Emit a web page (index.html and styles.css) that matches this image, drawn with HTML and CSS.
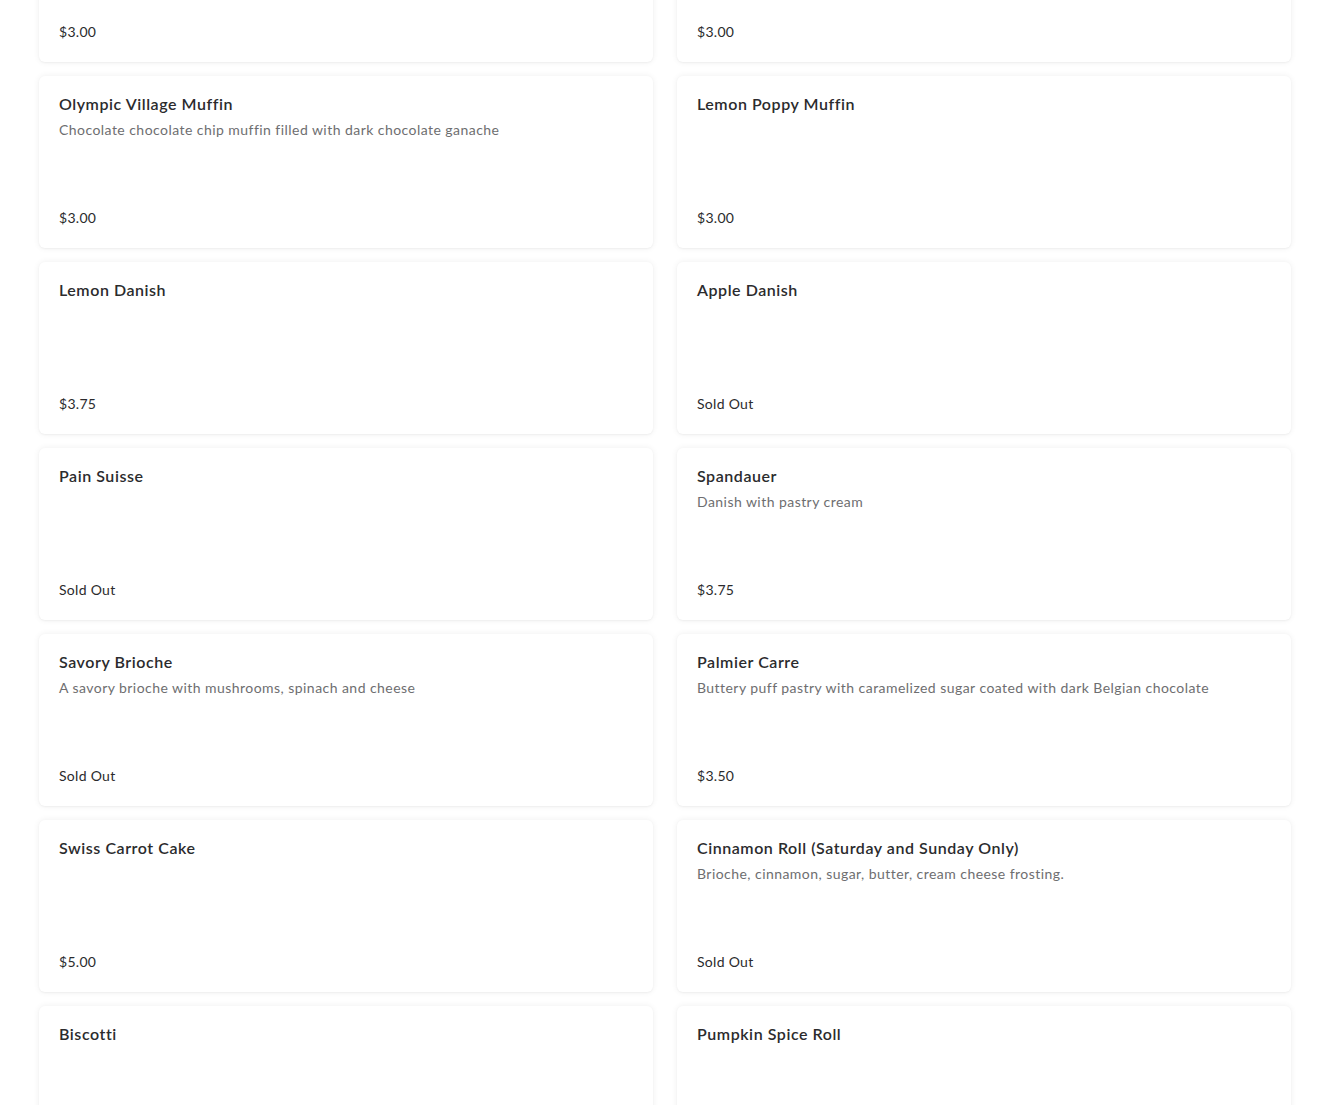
FILE: index.html
```html
<!DOCTYPE html>
<html>
<head>
<meta charset="utf-8">
<link rel="stylesheet" href="styles.css">
</head>
<body>
<div class="grid">
  <div class="card"><div class="price">$3.00</div></div>
  <div class="card"><div class="price">$3.00</div></div>
  <div class="card"><div class="title">Olympic Village Muffin</div><div class="desc">Chocolate chocolate chip muffin filled with dark chocolate ganache</div><div class="price">$3.00</div></div>
  <div class="card"><div class="title">Lemon Poppy Muffin</div><div class="price">$3.00</div></div>
  <div class="card"><div class="title">Lemon Danish</div><div class="price">$3.75</div></div>
  <div class="card"><div class="title">Apple Danish</div><div class="price">Sold Out</div></div>
  <div class="card"><div class="title">Pain Suisse</div><div class="price">Sold Out</div></div>
  <div class="card"><div class="title">Spandauer</div><div class="desc">Danish with pastry cream</div><div class="price">$3.75</div></div>
  <div class="card"><div class="title">Savory Brioche</div><div class="desc">A savory brioche with mushrooms, spinach and cheese</div><div class="price">Sold Out</div></div>
  <div class="card"><div class="title">Palmier Carre</div><div class="desc">Buttery puff pastry with caramelized sugar coated with dark Belgian chocolate</div><div class="price">$3.50</div></div>
  <div class="card"><div class="title">Swiss Carrot Cake</div><div class="price">$5.00</div></div>
  <div class="card"><div class="title">Cinnamon Roll (Saturday and Sunday Only)</div><div class="desc">Brioche, cinnamon, sugar, butter, cream cheese frosting.</div><div class="price">Sold Out</div></div>
  <div class="card"><div class="title">Biscotti</div></div>
  <div class="card"><div class="title">Pumpkin Spice Roll</div></div>
</div>
</body>
</html>
```
FILE: styles.css
```css
html, body {
  margin: 0;
  padding: 0;
  background: #ffffff;
  overflow: hidden;
}
body {
  height: 1105px;
  font-family: "Lato", "Noto Sans", sans-serif;
  color: #2b2b2b;
}
.grid {
  display: grid;
  grid-template-columns: 614px 614px;
  column-gap: 24px;
  row-gap: 14px;
  padding: 0 39px;
  margin-top: -110px;
}
.card {
  height: 172px;
  box-sizing: border-box;
  background: #fff;
  border-radius: 6px;
  box-shadow: 0 0 6px rgba(0, 0, 0, 0.07), 0 1px 2px rgba(0, 0, 0, 0.04);
  padding: 16px 20px 20px;
  display: flex;
  flex-direction: column;
}
.title {
  font-size: 16px;
  line-height: 24px;
  font-weight: 600;
  color: #2b2b2d;
  letter-spacing: 0.55px;
}
.desc {
  margin-top: 4px;
  font-size: 14px;
  line-height: 20px;
  color: #6e6e70;
  letter-spacing: 0.45px;
}
.price {
  margin-top: auto;
  font-size: 14px;
  line-height: 20px;
  color: #2b2b2d;
  letter-spacing: 0.3px;
}
```
